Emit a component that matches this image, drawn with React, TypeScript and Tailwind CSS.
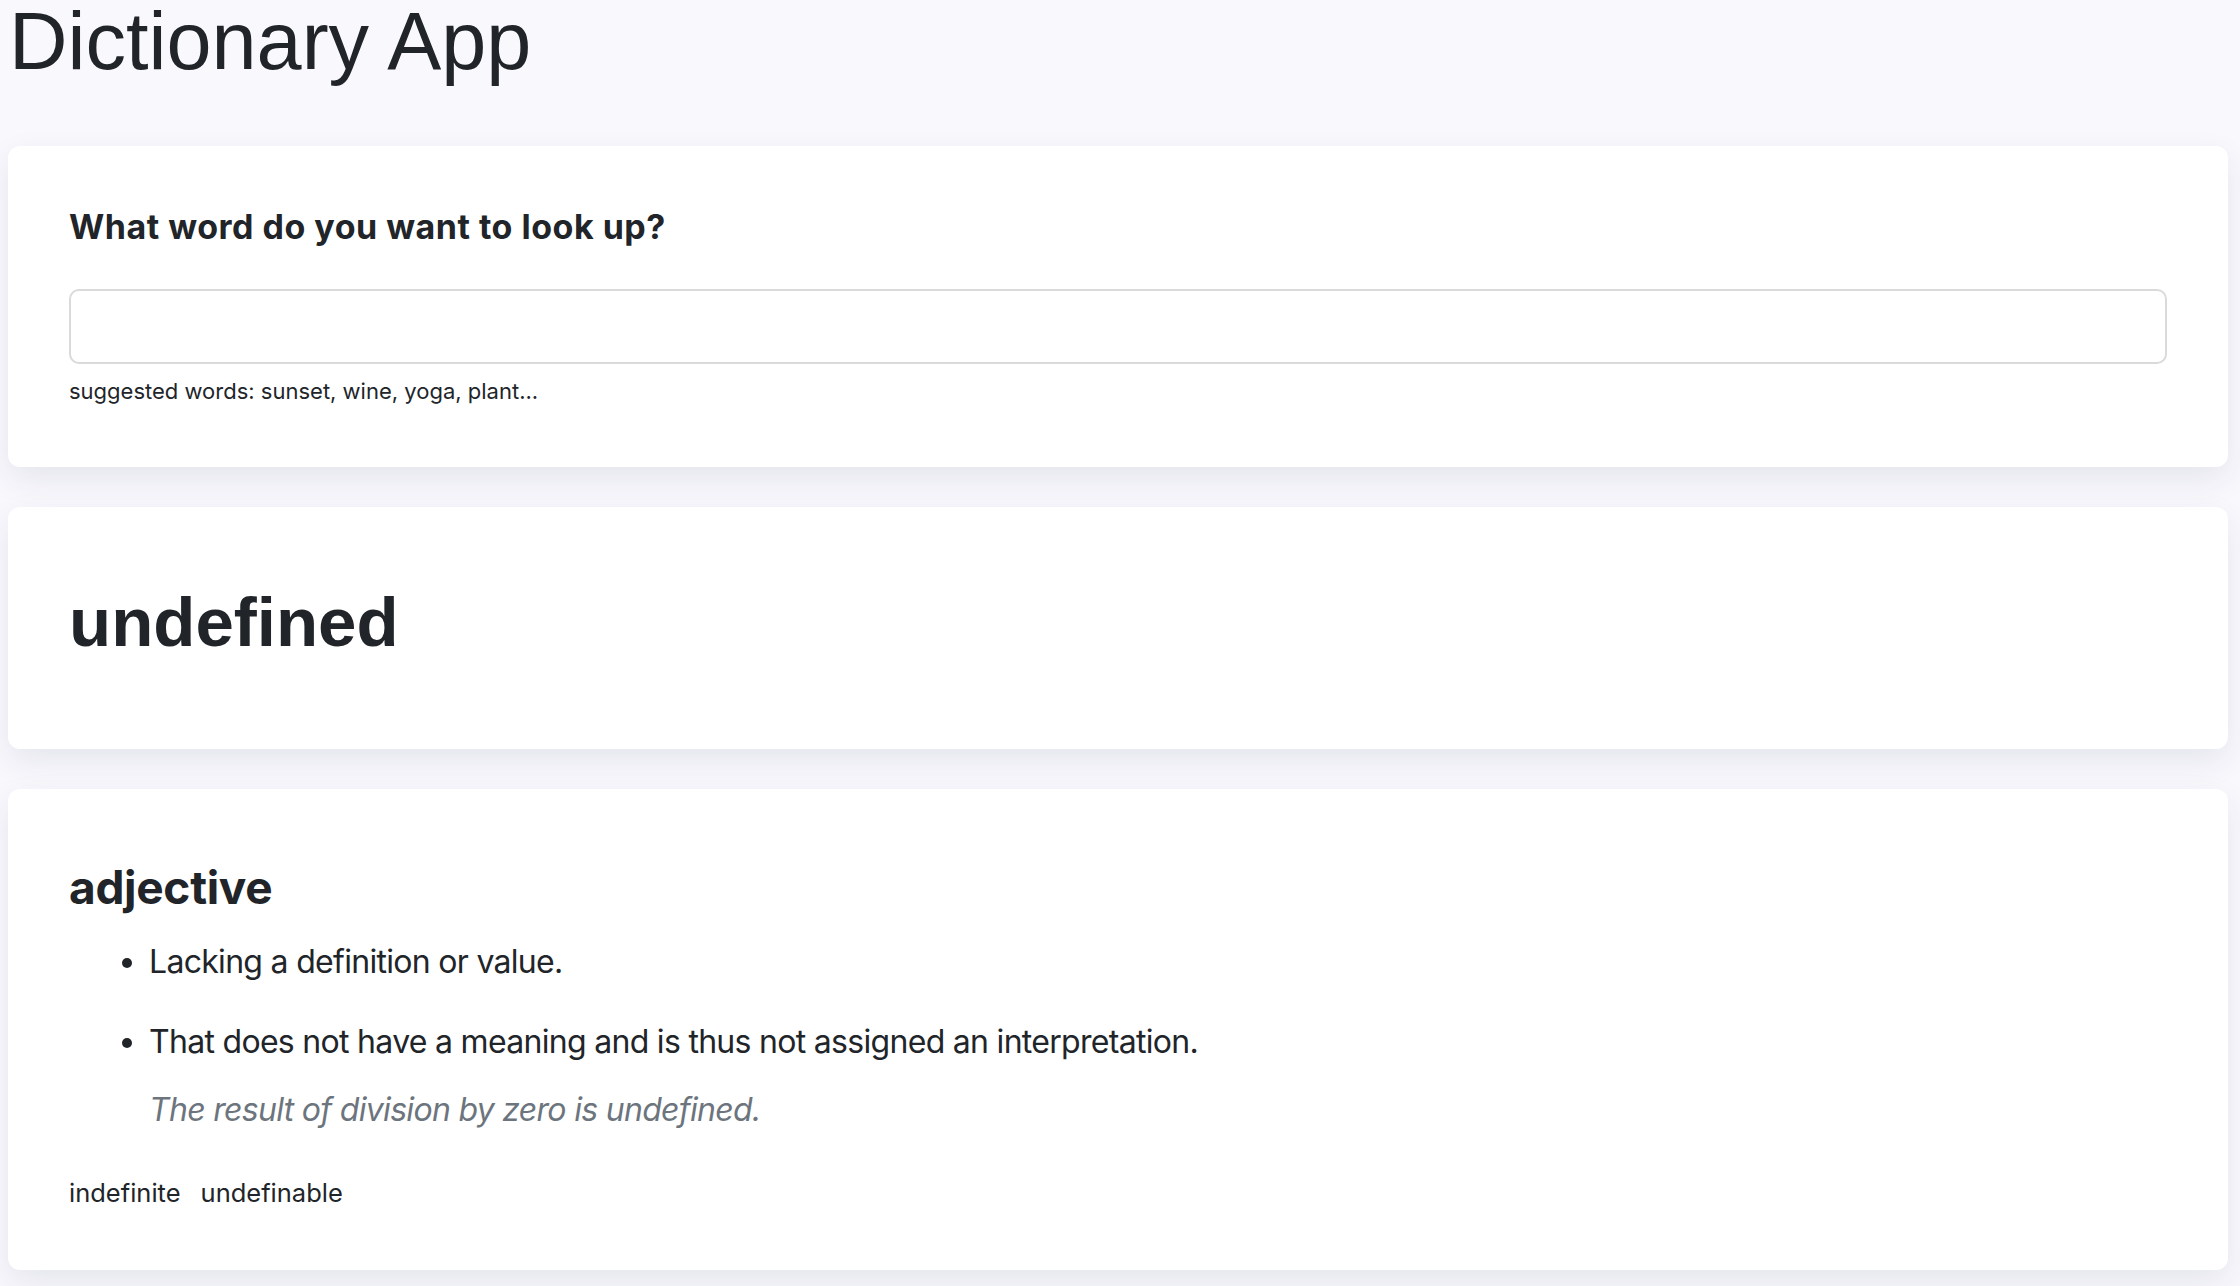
import React from 'react';

const meanings = [
  {
    partOfSpeech: 'adjective',
    definitions: [
      { definition: 'Lacking a definition or value.' },
      {
        definition: 'That does not have a meaning and is thus not assigned an interpretation.',
        example: 'The result of division by zero is undefined.',
      },
    ],
    synonyms: ['indefinite', 'undefinable'],
  },
];

const card = 'bg-white rounded-[12px] shadow-[0_12px_32px_rgba(40,40,80,0.09)]';

export default function App() {
  return (
    <div className="min-h-screen bg-[#f8f8fd] pl-2 pr-3 pb-4 text-[#212529] font-['Inter',sans-serif]">
      <h1 className="font-['Liberation_Sans',Arial,sans-serif] text-[81px] leading-[83px] font-normal pl-[1px]">
        Dictionary App
      </h1>

      <div className="mt-[63px] flex flex-col gap-[40px]">
        {/* Search */}
        <section className={`${card} px-[61px] pt-[61px] pb-[60px]`}>
          <h2 className="text-[34px] leading-[40px] font-bold tracking-[0.5px]">
            What word do you want to look up?
          </h2>
          <input
            type="search"
            className="mt-[42px] block w-full h-[75px] rounded-[10px] border-2 border-[#dadada] bg-white px-4 text-[28px] outline-none"
          />
          <p className="mt-[12px] text-[22px] leading-[31px]">suggested words: sunset, wine, yoga, plant...</p>
        </section>

        {/* Word */}
        <section className={`${card} px-[61px] pt-[75px] pb-[85px]`}>
          <h2 className="font-['Liberation_Sans',Arial,sans-serif] text-[69px] leading-[82px] font-bold">undefined</h2>
        </section>

        {/* Meanings */}
        {meanings.map((meaning, index) => (
          <section key={index} className={`${card} px-[61px] pt-[71px] pb-[59px]`}>
            <h3 className="text-[46px] leading-[55px] font-bold tracking-[-0.3px]">{meaning.partOfSpeech}</h3>
            <ul className="mt-[23px] list-disc pl-[80px] text-[32px] leading-[48px] tracking-[-0.7px] flex flex-col gap-[32px]">
              {meaning.definitions.map((d, i) => (
                <li key={i}>
                  {d.definition}
                  {d.example && (
                    <div className="mt-[20px] italic text-[#6c757d]">{d.example}</div>
                  )}
                </li>
              ))}
            </ul>
            <div className="mt-[41px] flex gap-[20px] text-[25.5px] leading-[36px]">
              {meaning.synonyms.map((s) => (
                <span key={s}>{s}</span>
              ))}
            </div>
          </section>
        ))}
      </div>
    </div>
  );
}
